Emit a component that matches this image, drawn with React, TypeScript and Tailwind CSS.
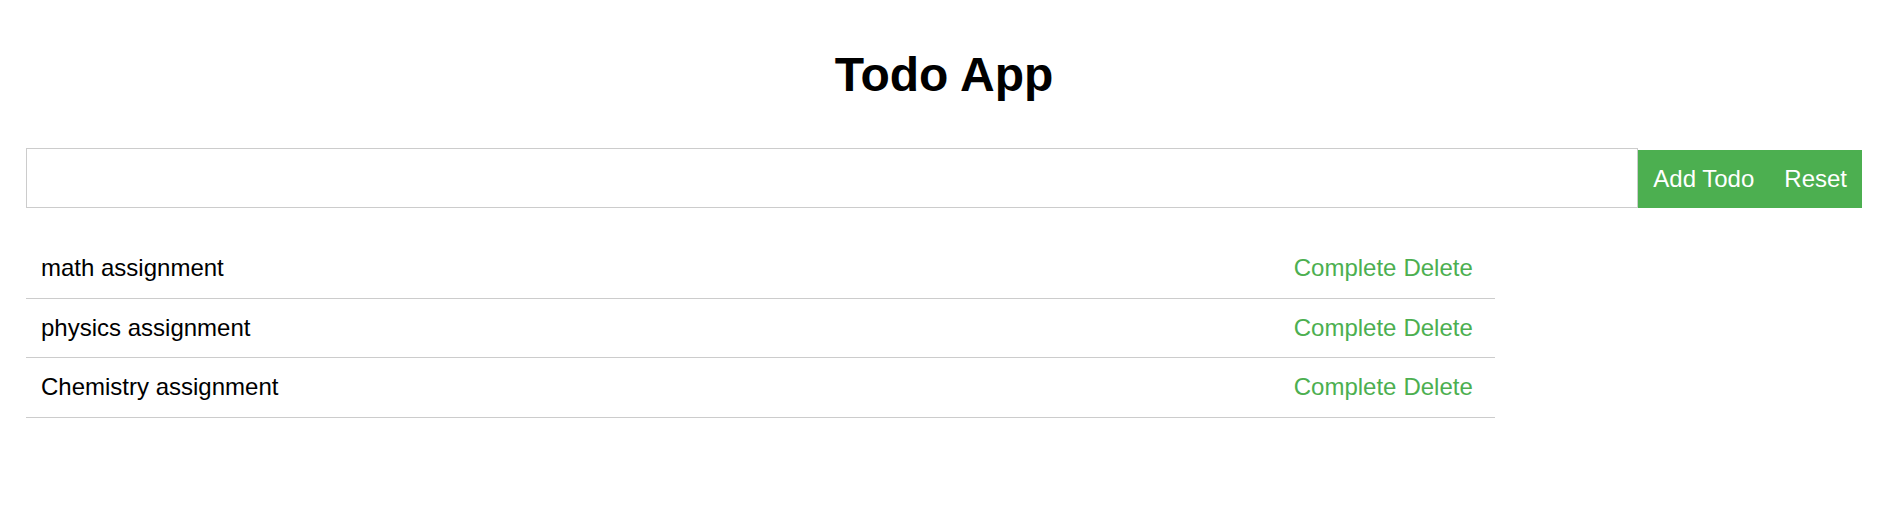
import React, { useState } from 'react';

interface Todo {
  id: number;
  text: string;
  done: boolean;
}

const initialTodos: Todo[] = [
  { id: 1, text: 'math assignment', done: false },
  { id: 2, text: 'physics assignment', done: false },
  { id: 3, text: 'Chemistry assignment', done: false },
];

export default function App() {
  const [todos, setTodos] = useState<Todo[]>(initialTodos);
  const [input, setInput] = useState('');

  const addTodo = () => {
    if (!input.trim()) return;
    setTodos([...todos, { id: Date.now(), text: input.trim(), done: false }]);
    setInput('');
  };

  const toggle = (id: number) =>
    setTodos(todos.map((t) => (t.id === id ? { ...t, done: !t.done } : t)));

  const remove = (id: number) => setTodos(todos.filter((t) => t.id !== id));

  return (
    <div className="min-h-screen bg-white pl-[26px] pr-[28px] pt-[51px] font-['Liberation_Sans',Arial,sans-serif] text-black">
      <h1 className="text-center text-[48px] font-bold leading-none">Todo App</h1>

      <div className="mt-[49px] flex items-end">
        <input
          value={input}
          onChange={(e) => setInput(e.target.value)}
          className="h-[60px] min-w-0 flex-1 border border-[#ccc] px-[15px] text-[24px] outline-none"
        />
        <button
          onClick={addTodo}
          className="h-[58px] bg-[#4caf50] px-[15px] text-[24px] text-white"
        >
          Add Todo
        </button>
        <button
          onClick={() => setTodos(initialTodos)}
          className="h-[58px] bg-[#4caf50] px-[15px] text-[24px] text-white"
        >
          Reset
        </button>
      </div>

      <ul className="mt-[31px] w-[80%]">
        {todos.map((t) => (
          <li
            key={t.id}
            className="flex items-center justify-between border-b border-[#ccc] py-[15px] pl-[15px] pr-[22px] text-[24px] leading-[28.5px]"
          >
            <span className={t.done ? 'line-through' : ''}>{t.text}</span>
            <div className="flex gap-[7px] text-[#4caf50]">
              <button onClick={() => toggle(t.id)}>Complete</button>
              <button onClick={() => remove(t.id)}>Delete</button>
            </div>
          </li>
        ))}
      </ul>
    </div>
  );
}
